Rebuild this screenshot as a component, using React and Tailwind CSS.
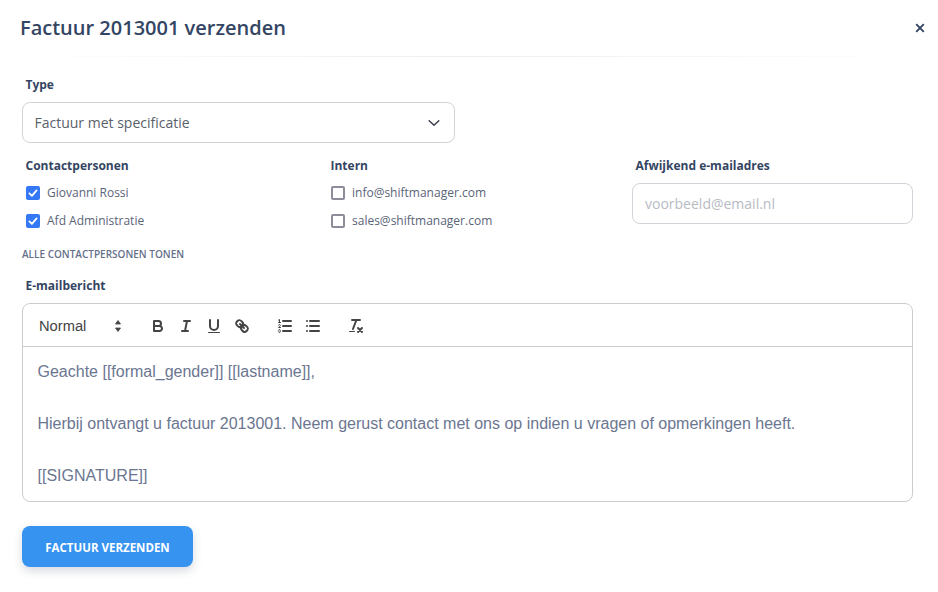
import React from "react";

function Icon({ children, className = "" }) {
  return (
    <button className={"flex h-6 w-7 items-center justify-center " + className}>
      <svg viewBox="0 0 18 18" className="h-[18px] w-[18px]" fill="none" stroke="#444" strokeWidth="2" strokeLinecap="round" strokeLinejoin="round">
        {children}
      </svg>
    </button>
  );
}

function Check({ checked, label }) {
  return (
    <label className="flex h-7 items-center">
      {checked ? (
        <span className="flex h-[14px] w-[14px] items-center justify-center rounded-[2px] bg-[#3478f6]">
          <svg viewBox="0 0 14 14" className="h-[14px] w-[14px]" fill="none" stroke="white" strokeWidth="1.8" strokeLinecap="round" strokeLinejoin="round">
            <path d="M3.4 7.4 L5.9 9.8 L10.6 4.4" />
          </svg>
        </span>
      ) : (
        <span className="h-[14px] w-[14px] rounded-[2px] border-2 border-[#8d8d99] bg-white" />
      )}
      <span className="ml-[7px] text-[12px] leading-4 text-[#5a6478]">{label}</span>
    </label>
  );
}

function Label({ children, className = "" }) {
  return <div className={"pl-[3.5px] text-[12px] font-bold leading-4 text-[#344563] " + className}>{children}</div>;
}

export default function App() {
  return (
    <div className="h-[592px] w-[938px] overflow-hidden bg-white font-['Open_Sans','Noto_Sans',sans-serif]">
      <header className="relative flex h-[56px] items-center pl-5">
        <h1 className="text-[20px] font-semibold leading-7 text-[#344563]">Factuur 2013001 verzenden</h1>
        <button className="absolute left-[914px] top-[22px] text-[#344563]">
          <svg viewBox="0 0 12 12" className="h-3 w-3" fill="none" stroke="currentColor" strokeWidth="1.9">
            <path d="M2.2 2.2 L9.8 9.8 M9.8 2.2 L2.2 9.8" />
          </svg>
        </button>
      </header>
      <div className="ml-5 h-px w-[890px] bg-gradient-to-r from-transparent via-[#eeeeee] to-transparent" />

      <main className="px-[22px] pt-5">
        <Label>Type</Label>
        <div className="mt-[9px] flex h-[41px] w-[433px] items-center justify-between rounded-lg border border-[#d2d2d8] bg-white pl-[11.5px] pr-[14px]">
          <span className="text-[14px] leading-5 text-[#5a5f6a]">Factuur met specificatie</span>
          <svg viewBox="0 0 12 12" className="h-3 w-3" fill="none" stroke="#3a3f4a" strokeWidth="1.5" strokeLinecap="round" strokeLinejoin="round">
            <path d="M1.2 3.8 L6 8.2 L10.8 3.8" />
          </svg>
        </div>

        <div className="mt-[15px] grid w-[891px] grid-cols-3 gap-x-6">
          <div>
            <Label>Contactpersonen</Label>
            <div className="mt-[5px] pl-1">
              <Check checked label="Giovanni Rossi" />
              <Check checked label="Afd Administratie" />
            </div>
          </div>
          <div>
            <Label>Intern</Label>
            <div className="mt-[5px] pl-1">
              <Check label="info@shiftmanager.com" />
              <Check label="sales@shiftmanager.com" />
            </div>
          </div>
          <div>
            <Label>Afwijkend e-mailadres</Label>
            <div className="mt-[9px] flex h-[41px] items-center rounded-lg border border-[#d2d2d8] bg-white pl-3">
              <span className="text-[14px] leading-5 text-[#b8bbc4]">voorbeeld@email.nl</span>
            </div>
          </div>
        </div>

        <div className="mt-[11px] text-[10px] font-semibold leading-4 text-[#656f8a]">ALLE CONTACTPERSONEN TONEN</div>

        <Label className="mt-[16px]">E-mailbericht</Label>

        <div className="mt-[9px] w-[891px] overflow-hidden rounded-lg border border-[#cccccc]">
          <div className="flex h-[43px] items-center border-b border-[#cccccc] pl-2 pt-[2px]">
            <div className="mr-[15px] flex h-6 w-[98px] items-center justify-between pl-2 pr-[2px]">
              <span className="font-['Liberation_Sans',sans-serif] text-[14.7px] text-[#444444]">Normal</span>
              <svg viewBox="0 0 18 18" className="h-[18px] w-[18px]" fill="#444">
                <path d="M6.5 7 L9 3.5 L11.5 7 Z M6.5 11 L9 14.5 L11.5 11 Z" stroke="#444" strokeWidth="0.8" strokeLinejoin="round" />
              </svg>
            </div>
            <div className="mr-[15px] flex">
              <Icon>
                <path d="M5,4H9.5A2.5,2.5,0,0,1,12,6.5v0A2.5,2.5,0,0,1,9.5,9H5V4Z" />
                <path d="M5,9h5.5A2.5,2.5,0,0,1,13,11.5v0A2.5,2.5,0,0,1,10.5,14H5V9Z" />
              </Icon>
              <Icon>
                <path d="M7 4H13 M5 14H11 M8 14L10 4" />
              </Icon>
              <Icon>
                <path d="M5,3V9a4.012,4.012,0,0,0,4,4H9a4.012,4.012,0,0,0,4-4V3" />
                <rect x="3" y="15" width="12" height="1" rx="0.5" fill="#444" stroke="none" />
              </Icon>
              <Icon>
                <path d="M7 7L11 11" />
                <path d="M8.9,4.577a3.476,3.476,0,0,1,.36,4.679A3.476,3.476,0,0,1,4.577,8.9C3.185,7.5,2.035,6.4,4.217,4.217S7.5,3.185,8.9,4.577Z" />
                <path d="M13.423,9.1a3.476,3.476,0,0,0-4.679-.36,3.476,3.476,0,0,0,.36,4.679c1.392,1.392,2.5,2.542,4.679.36S14.815,10.5,13.423,9.1Z" />
              </Icon>
            </div>
            <div className="mr-[15px] flex">
              <Icon>
                <path d="M7 4H15 M7 9H15 M7 14H15" />
                <g strokeWidth="1">
                  <path d="M2.5 5.5H4.5 M3.5 5.5V2.5L2.6 3" />
                  <path d="M4.5,10.5h-2c0-.234,1.85-1.076,1.85-2.234A0.959,0.959,0,0,0,2.5,8.156" />
                  <path d="M2.5,14.846a0.959,0.959,0,0,0,1.85-.109A0.7,0.7,0,0,0,3.75,14a0.688,0.688,0,0,0,.6-0.736,0.959,0.959,0,0,0-1.85-.109" />
                </g>
              </Icon>
              <Icon>
                <path d="M6 4H15 M6 9H15 M6 14H15 M3 4H3 M3 9H3 M3 14H3" />
              </Icon>
            </div>
            <div className="flex">
              <Icon>
                <path d="M5 3H13 M6 12L9.35 3" />
                <path d="M11 11L15 15 M15 11L11 15" />
                <rect x="2" y="14" width="6" height="1" rx="0.5" fill="#444" stroke="none" />
              </Icon>
            </div>
          </div>
          <div className="h-[154px] px-[14.5px] py-3 font-['Liberation_Sans',sans-serif] text-[16px] leading-[26px] text-[#6b7691]">
            <p>Geachte [[formal_gender]] [[lastname]],</p>
            <p><br /></p>
            <p>Hierbij ontvangt u factuur 2013001. Neem gerust contact met ons op indien u vragen of opmerkingen heeft.</p>
            <p><br /></p>
            <p>[[SIGNATURE]]</p>
          </div>
        </div>

        <button className="mt-[24px] flex h-[41px] w-[171px] items-center justify-center rounded-lg bg-[#3793f0] pt-[2px] text-[11.5px] font-bold text-white shadow-[0_4px_10px_rgba(60,70,100,0.2)]">
          FACTUUR VERZENDEN
        </button>
      </main>
    </div>
  );
}
